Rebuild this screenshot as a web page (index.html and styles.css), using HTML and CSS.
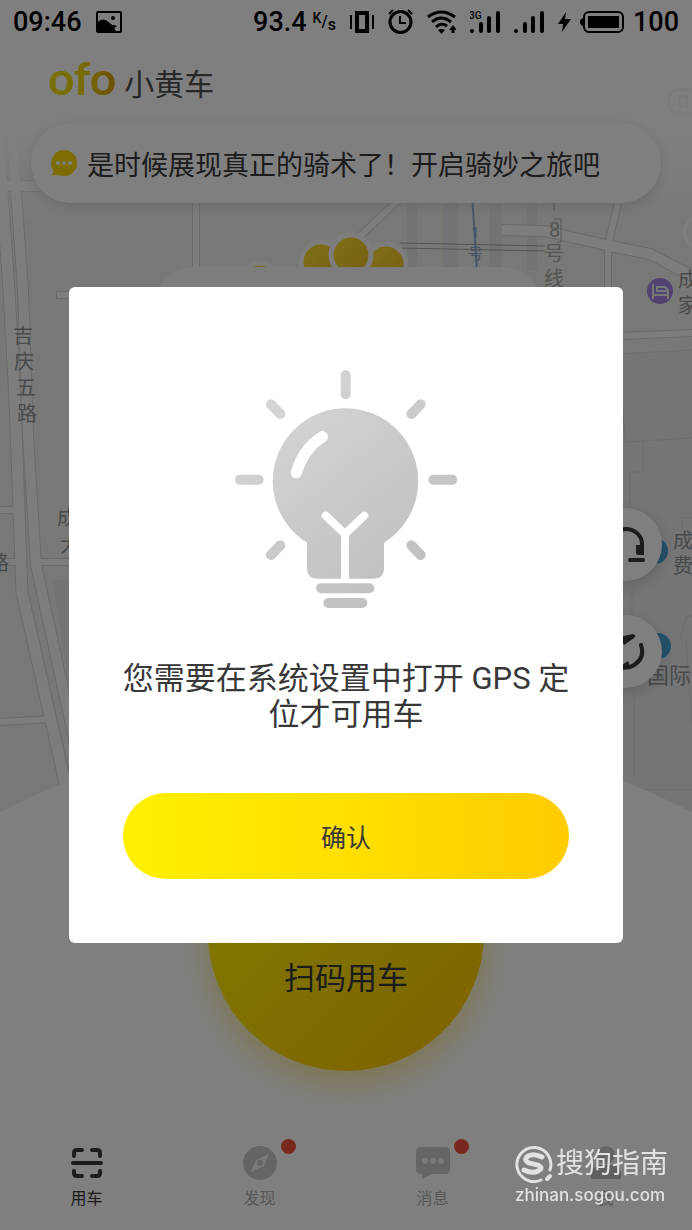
FILE: index.html
```html
<!DOCTYPE html>
<html lang="zh-CN">
<head>
    <meta charset="UTF-8">
    <meta name="viewport" content="width=device-width, initial-scale=1.0">
    <title>ofo 小黄车</title>
    <link rel="stylesheet" href="styles.css">
</head>
<body>
    <div class="app">
        <!-- Map -->
        <svg class="map" viewBox="0 0 692 1230" preserveAspectRatio="xMidYMin slice" aria-hidden="true">
            <defs>
                <linearGradient id="fade" x1="0" y1="0" x2="0" y2="1">
                    <stop offset="0.3" stop-color="#fff"/>
                    <stop offset="0.6" stop-color="#fff" stop-opacity="0.85"/>
                    <stop offset="1" stop-color="#fff" stop-opacity="0"/>
                </linearGradient>
                <linearGradient id="pin" x1="0" y1="0" x2="1" y2="1">
                    <stop offset="0" stop-color="#ffe22e"/>
                    <stop offset="1" stop-color="#efbd2c"/>
                </linearGradient>
            </defs>
            <rect width="692" height="1230" fill="#f1f1ed"/>
            <path fill="#eaeaea" d="M600 354L692 350V830H600Z"/>
            <path fill="#e9e9e5" d="M52 580H70V690Z"/>
            <g fill="#e4e7e9">
                <path d="M407 60h10v210h-10zM443 60h15v210h-15zM489 60h13v210h-13zM527 60h10v210h-10z"/>
            </g>
            <g fill="none" stroke="#d4d4d2" stroke-linejoin="round">
                <path stroke-width="13" d="M-5 60L2 192L9 290L15 400L22 592L66 787"/>
                <path stroke-width="12" d="M8 60L16 192L23 290L28 435L36 565L82 775"/>
                <path stroke-width="8" d="M0 510H14M0 562H16M40 562H75M0 722L48 719M196 190V275M358 238L405 194M56 295H80"/>
                <path stroke-width="12" d="M0 186H40M502 230L545 231L610 246L650 254L700 280"/>
                <path stroke-width="8" d="M620 195L608 245V290M618 336L692 333"/>
            </g>
            <g fill="none" stroke="#fbfbfb" stroke-linejoin="round">
                <path stroke-width="11" d="M-5 60L2 192L9 290L15 400L22 592L66 787"/>
                <path stroke-width="10" d="M8 60L16 192L23 290L28 435L36 565L82 775"/>
                <path stroke-width="6" d="M0 510H18M0 562H20M37 562H75M0 722L51 719M196 190V275M358 238L405 194M57 295H80"/>
                <path stroke-width="10" d="M0 186H40M502 230L545 231L610 246L650 254L700 280"/>
                <path stroke-width="6" d="M620 195L608 245V290M618 336L692 333"/>
            </g>
            <g fill="none" stroke="#dcdcdc">
                <path d="M620 354L692 350M622 405L626 442L692 438M643 442V472H630V512M632 590V615M634 690V775M692 518H682V570M680 640L686 616H692M686 640L692 725M636 790H692M28 592L71 779"/>
            </g>
            <path fill="none" stroke="#a8a8a4" d="M400 243L545 246M400 248L545 251"/>
            <path fill="none" stroke="#8aa9cf" stroke-width="2" d="M472 195L477 270"/>
            <rect y="43" width="692" height="180" fill="url(#fade)"/>
            <rect width="692" height="43" fill="#fff"/>

            <g class="map-label">
                <text x="13" y="343">吉</text>
                <text x="14" y="369">庆</text>
                <text x="16" y="395">五</text>
                <text x="17" y="421">路</text>
                <text x="-11" y="570">路</text>
                <text x="57" y="525">成</text>
                <text x="60" y="552">大</text>
                <text x="678" y="287">成</text>
                <text x="678" y="313">家</text>
                <text x="673" y="548">成</text>
                <text x="673" y="573">费</text>
            </g>
            <text class="map-label place-label" x="647" y="683">国际</text>
            <g class="map-label line-label">
                <text x="549" y="237">8</text>
                <text x="544" y="261">号</text>
                <text x="544" y="286">线</text>
            </g>
            <g class="map-label metro-label">
                <text x="471" y="238">1</text>
                <text x="468" y="259">号</text>
            </g>
            <path fill="none" stroke="#aaa" d="M554 200V211M554 219H561V242H557"/>

            <circle cx="660" cy="291" r="13" fill="#a585e0"/>
            <path fill="none" stroke="#eee" stroke-width="2" d="M653 284V299M653 295H668V299M668 295V290L665 287H657V291H668"/>
            <circle cx="655" cy="551" r="13" fill="#4aa3d8"/>
            <circle cx="658" cy="646" r="13" fill="#4aa3d8"/>
            <circle cx="703" cy="232" r="18" fill="none" stroke="#fff" stroke-width="3"/>
            <rect x="669" y="90" width="30" height="23" rx="8" fill="none" stroke="#f6f6f6" stroke-width="3"/>
            <rect x="680" y="96" width="7" height="11" fill="none" stroke="#f4f4f4" stroke-width="2"/>

            <g fill="url(#pin)" stroke="#fbfbfb" stroke-width="5">
                <circle cx="260" cy="281" r="18"/>
                <circle cx="321" cy="262" r="20"/>
                <circle cx="386" cy="264" r="20"/>
                <circle cx="351" cy="255" r="20"/>
            </g>
            <rect x="156" y="267" width="384" height="120" rx="36" fill="#fafafa"/>
            <circle cx="346" cy="1471" r="744" fill="#fff"/>
        </svg>

        <!-- Status bar -->
        <div class="status-bar">
            <div class="status-group">
                <span>09:46</span>
                <svg width="26" height="22" viewBox="0 0 26 22">
                    <path fill-rule="evenodd" d="M2 0H24Q26 0 26 2V20Q26 22 24 22H2Q0 22 0 20V2Q0 0 2 0ZM2 2V11Q6 7 11 10L16 14L21 15Q16 17 20 20L24 20V2ZM17 5a2 2 0 1 1 0 4a2 2 0 0 1 0-4z"/>
                    <path d="M2 11Q6 7 11 10L16 14L21 15Q16 17 20 20L2 20Z"/>
                </svg>
            </div>
            <div class="status-group">
                <span class="speed">93.4<span class="unit"><span class="unit-top">K</span>/<span class="unit-low">s</span></span></span>
                <svg width="24" height="24" viewBox="0 0 24 24" fill="none" stroke="#000">
                    <path stroke-width="4" d="M7 3H17V21H7Z"/>
                    <path stroke-width="2" d="M1 5V19M23 5V19"/>
                </svg>
                <svg width="25" height="25" viewBox="0 0 25 25" fill="none" stroke="#000">
                    <circle cx="12.5" cy="13" r="10.5" stroke-width="3"/>
                    <path stroke-width="2" d="M12 7V14H18M1 5L5 1M20 1L24 5"/>
                </svg>
                <svg width="29" height="24" viewBox="0 0 29 24" fill="none" stroke="#000" stroke-width="3">
                    <path d="M1 7Q14 -3 28 7M5 12Q14 4 24 12M9 17Q14 12 20 16"/>
                    <path fill="#000" stroke="none" d="M11 20Q14 18 18 20L14.500 24ZM26 15L30 20H27.500V23H24.500V20H22Z"/>
                </svg>
                <svg width="30" height="24" viewBox="0 0 30 24" fill="none" stroke="#000" stroke-width="4" stroke-linecap="round">
                    <path d="M2 21V21M11 14V21M19 8V21M28 3V21"/>
                    <text class="net-type" x="-1" y="9">3G</text>
                </svg>
                <svg width="30" height="24" viewBox="0 0 30 24" fill="none" stroke="#000" stroke-width="4" stroke-linecap="round">
                    <path d="M2 21V21M11 14V21M19 8V21M28 3V21"/>
                </svg>
                <span class="battery">
                    <svg width="13" height="20" viewBox="0 0 13 20">
                        <path d="M8 0L0 12H5L4 20L13 7H7Z"/>
                    </svg>
                    <svg width="44" height="22" viewBox="0 0 44 22">
                        <rect x="4" y="1" width="39" height="20" rx="5" fill="none" stroke="#000" stroke-width="2"/>
                        <rect x="8" y="5" width="31" height="12"/>
                        <path d="M3 7Q0 8 0 11T3 15Z"/>
                    </svg>
                    <span>100</span>
                </span>
            </div>
        </div>

        <!-- Header -->
        <header class="header">
            <span class="logo">ofo</span>
            <span class="logo-name">小黄车</span>
        </header>

        <a class="notice" href="#">
            <svg width="26" height="26" viewBox="0 0 26 26">
                <path fill="#ffd900" d="M13 0a13 13 0 1 1-4 25.300H2Q1 25 1 24L3 21A13 13 0 0 1 13 0z"/>
                <g fill="#fff">
                    <circle cx="7" cy="13" r="2"/>
                    <circle cx="13" cy="13" r="2"/>
                    <circle cx="19" cy="13" r="2"/>
                </g>
            </svg>
            <span>是时候展现真正的骑术了！开启骑妙之旅吧</span>
        </a>

        <!-- Floating tools -->
        <div class="tools">
            <button class="tool" type="button" aria-label="客服">
                <svg width="40" height="40" viewBox="0 0 40 40" fill="none" stroke="#383838" stroke-width="4" stroke-linecap="round">
                    <path d="M4 22V19A16 15 0 0 1 36 19V24M24 35H37"/>
                    <path fill="#383838" stroke="none" d="M30 20H38V30H32Q30 30 30 28ZM2 20H10V30H4Q2 30 2 28Z"/>
                </svg>
            </button>
            <button class="tool" type="button" aria-label="刷新">
                <svg width="40" height="40" viewBox="0 0 40 40" fill="none" stroke="#383838" stroke-width="4" stroke-linecap="round">
                    <path d="M35 13Q40 28 24 35M5 27A16 16 0 0 1 16 6"/>
                    <path fill="#383838" stroke="none" d="M13 5L27 2Q31 3 28 6L18 13ZM25 37L16 38V33L22 29Z"/>
                </svg>
            </button>
        </div>

        <button class="scan" type="button">扫码用车</button>

        <!-- Tab bar -->
        <nav class="tabs">
            <a class="tab active" href="#">
                <svg width="34" height="34" viewBox="0 0 34 34" fill="none" stroke="currentColor" stroke-width="4">
                    <path stroke-linecap="round" d="M4 10V7Q4 4 7 4H12M22 4H27Q30 4 30 7V10M4 25V27Q4 30 7 30H12M22 30H27Q30 30 30 27V25"/>
                    <path stroke-linecap="round" d="M3 17H31"/>
                </svg>
                <span>用车</span>
            </a>
            <a class="tab" href="#">
                <svg width="34" height="34" viewBox="0 0 34 34">
                    <circle cx="17" cy="17" r="17" fill="#cacaca"/>
                    <path fill="#f4f4f4" d="M26 8L21 20L8 26L13 14Z"/>
                    <circle cx="17" cy="17" r="3" fill="#cacaca"/>
                </svg>
                <span>发现</span>
                <i class="dot"></i>
            </a>
            <a class="tab" href="#">
                <svg width="34" height="34" viewBox="0 0 34 34">
                    <path fill="#cacaca" d="M5 1H29Q34 1 34 6V23Q34 28 29 28H16L6 33V28Q0 28 0 23V6Q0 1 5 1Z"/>
                    <g fill="#f2f2f2">
                        <circle cx="9" cy="15" r="3"/>
                        <circle cx="17" cy="15" r="3"/>
                        <circle cx="25" cy="15" r="3"/>
                    </g>
                </svg>
                <span>消息</span>
                <i class="dot"></i>
            </a>
            <a class="tab" href="#">
                <svg width="34" height="34" viewBox="0 0 34 34">
                    <circle cx="17" cy="9" r="9" fill="#cacaca"/>
                    <path fill="#c0c0c0" d="M2 33V26Q3 21 11 19H23Q31 21 32 26V33Z"/>
                </svg>
                <span>我</span>
            </a>
        </nav>
    </div>

    <!-- GPS dialog -->
    <div class="overlay">
        <div class="dialog" role="dialog" aria-modal="true" aria-labelledby="gps-text">
            <svg class="bulb" width="222" height="238" viewBox="45 60 666 714" aria-hidden="true">
                <defs>
                    <linearGradient id="grey" gradientUnits="userSpaceOnUse" x1="130" y1="120" x2="600" y2="700">
                        <stop offset="0" stop-color="#d6d6d6"/>
                        <stop offset="1" stop-color="#bfbfbf"/>
                    </linearGradient>
                </defs>
                <path fill="url(#grey)" d="M377 175A218 218 0 0 1 492 578V654Q492 686 460 686H292Q261 686 261 654V578A218 218 0 0 1 377 175Z"/>
                <g fill="none" stroke="url(#grey)" stroke-width="30" stroke-linecap="round">
                    <path d="M377 75V133M153 163L181 192M602 163L574 192M59 389H116M640 389H697M153 615L181 586M602 615L574 586M303 715H448M325 759H427"/>
                </g>
                <g fill="none" stroke="#fff" stroke-linecap="round">
                    <path stroke-width="34" d="M307 260Q250 296 229 368"/>
                    <path stroke-width="24" d="M317 497L375 552L433 497"/>
                    <path stroke-width="24" stroke-linecap="butt" d="M375 550V692"/>
                </g>
            </svg>
            <p class="dialog-text" id="gps-text">您需要在系统设置中打开 GPS 定位才可用车</p>
            <button class="confirm" type="button">确认</button>
        </div>
    </div>

    <!-- Watermark -->
    <div class="watermark">
        <div class="watermark-brand">
            <svg width="38" height="38" viewBox="0 0 38 38" fill="none" stroke="#e2e2e2" stroke-width="3" stroke-linecap="round">
                <path d="M26 35A17 17 0 1 1 35 25"/>
                <path stroke-width="4" d="M32 34L35 31"/>
                <path stroke-width="5" d="M27 12Q19 8 13 11Q8 15 14 18L23 20Q29 23 23 26Q17 29 9 25"/>
            </svg>
            <span>搜狗指南</span>
        </div>
        <div class="watermark-url">zhinan.sogou.com</div>
    </div>
</body>
</html>
```
FILE: styles.css
```css
* {
    box-sizing: border-box;
}

body {
    margin: 0;
    background: #fff;
    font-family: Roboto, "Noto Sans CJK SC", sans-serif;
    color: #383838;
}

a {
    color: inherit;
    text-decoration: none;
}

button {
    padding: 0;
    border: 0;
    font-family: inherit;
    color: inherit;
    cursor: pointer;
}

svg {
    display: block;
    flex-shrink: 0;
}

.app {
    position: relative;
    display: flex;
    flex-direction: column;
    min-height: 100vh;
    overflow: hidden;
    isolation: isolate;
}

/* Map */
.map {
    position: absolute;
    inset: 0;
    z-index: -1;
    width: 100%;
    height: 100%;
}

.map-label {
    font-size: 20px;
    fill: #909496;
}

.place-label {
    font-size: 22px;
}

.line-label {
    fill: #aaa;
}

.metro-label {
    font-size: 15px;
    fill: #8aa9cf;
}

/* Status Bar */
.status-bar {
    display: flex;
    justify-content: space-between;
    align-items: center;
    height: 43px;
    padding: 0 13px;
    font-size: 27px;
    font-weight: 500;
    color: #000;
}

.status-group {
    display: flex;
    align-items: center;
    gap: 14px;
}

.speed,
.unit {
    display: flex;
    align-items: center;
}

.unit {
    margin-left: 6px;
    font-size: 16px;
}

.unit-top {
    align-self: flex-start;
    font-size: 14px;
    line-height: 12px;
}

.unit-low {
    align-self: flex-end;
    line-height: 12px;
}

.net-type {
    font-size: 10px;
    font-weight: 500;
    fill: #000;
    stroke: none;
}

.battery {
    display: flex;
    align-items: center;
    gap: 9px;
}

/* Header */
.header {
    display: flex;
    align-items: baseline;
    gap: 8px;
    height: 80px;
    padding: 3px 48px 0;
}

.logo {
    font-family: Lato, sans-serif;
    font-size: 46px;
    font-weight: 700;
    line-height: 64px;
    background: linear-gradient(90deg, #f0e000, #f0d800 50%, #d8a000);
    background-clip: text;
    -webkit-background-clip: text;
    color: transparent;
}

.logo-name {
    font-size: 30px;
    color: #505050;
}

.notice {
    display: flex;
    align-items: center;
    gap: 10px;
    height: 80px;
    margin: 0 31px;
    padding: 0 20px;
    border-radius: 40px;
    background: #fff;
    box-shadow: 0 4px 14px rgba(0, 0, 0, 0.12);
    font-size: 27px;
    white-space: nowrap;
}

/* Floating Tools */
.tools {
    display: flex;
    flex-direction: column;
    align-self: flex-end;
    gap: 34px;
    margin: 305px 30px 0 0;
}

.tool {
    display: flex;
    justify-content: center;
    align-items: center;
    width: 73px;
    height: 73px;
    border-radius: 50%;
    background: #fff;
    box-shadow: 0 4px 14px rgba(0, 0, 0, 0.16);
}

/* Scan Button */
.scan {
    align-self: center;
    width: 276px;
    height: 276px;
    margin-top: 107px;
    padding-top: 84px;
    border-radius: 50%;
    background: linear-gradient(135deg, #fff000 20%, #ffdf00 50%, #ffcc00 85%);
    box-shadow: 0 12px 36px rgba(255, 215, 60, 0.5);
    font-size: 31px;
}

/* Tab Bar */
.tabs {
    display: grid;
    grid-template-columns: repeat(4, 1fr);
    margin-top: auto;
    padding-bottom: 19px;
}

.tab {
    position: relative;
    display: flex;
    flex-direction: column;
    align-items: center;
    gap: 7px;
    font-size: 16px;
    line-height: 24px;
    color: #b0b0b0;
}

.tab.active {
    color: #383838;
}

.dot {
    position: absolute;
    top: -7px;
    left: calc(50% + 21px);
    width: 15px;
    height: 15px;
    border-radius: 50%;
    background: #f2503c;
}

/* Dialog */
.overlay {
    position: fixed;
    inset: 0;
    display: flex;
    justify-content: center;
    align-items: center;
    background: rgba(0, 0, 0, 0.5);
}

.dialog {
    display: flex;
    flex-direction: column;
    align-items: center;
    width: 80%;
    padding: 83px 48px 64px;
    border-radius: 6px;
    background: #fff;
}

.dialog-text {
    margin: 53px 0 60px;
    font-size: 31px;
    line-height: 36px;
    text-align: center;
}

.confirm {
    width: calc(100% - 12px);
    height: 86px;
    border-radius: 43px;
    background: linear-gradient(90deg, #fff000, #ffdf00 50%, #ffcc00);
    font-size: 25px;
}

/* Watermark */
.watermark {
    position: fixed;
    right: 24px;
    bottom: 24px;
    color: #e2e2e2;
}

.watermark-brand {
    display: flex;
    align-items: center;
    gap: 3px;
    font-size: 28px;
    line-height: 40px;
}

.watermark-url {
    font-family: Inter, sans-serif;
    font-size: 17px;
    font-weight: 500;
    line-height: 22px;
}
```
